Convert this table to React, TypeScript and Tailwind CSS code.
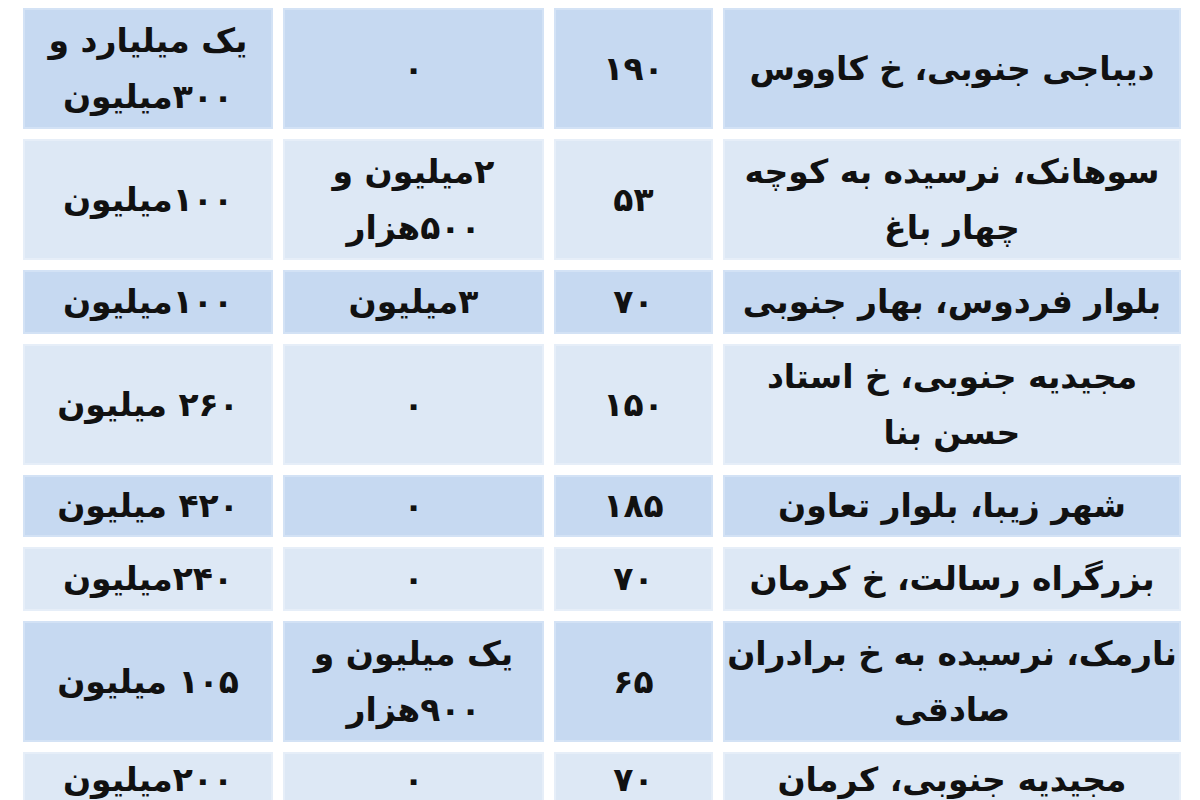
import React from "react";

type Row = {
  place: React.ReactNode;
  area: string;
  rent: React.ReactNode;
  deposit: React.ReactNode;
  dark: boolean;
  h: string;
};

const rows: Row[] = [
  { place: "دیباجی جنوبی، خ کاووس", area: "۱۹۰", rent: "۰", deposit: <>یک میلیارد و<br />۳۰۰میلیون</>, dark: true, h: "h-[121px]" },
  { place: <>سوهانک، نرسیده به کوچه<br />چهار باغ</>, area: "۵۳", rent: <>۲میلیون و<br />۵۰۰هزار</>, deposit: "۱۰۰میلیون", dark: false, h: "h-[121px]" },
  { place: "بلوار فردوس، بهار جنوبی", area: "۷۰", rent: "۳میلیون", deposit: "۱۰۰میلیون", dark: true, h: "h-[64px]" },
  { place: <>مجیدیه جنوبی، خ استاد<br />حسن بنا</>, area: "۱۵۰", rent: "۰", deposit: "۲۶۰ میلیون", dark: false, h: "h-[121px]" },
  { place: "شهر زیبا، بلوار تعاون", area: "۱۸۵", rent: "۰", deposit: "۴۲۰ میلیون", dark: true, h: "h-[62px]" },
  { place: "بزرگراه رسالت، خ کرمان", area: "۷۰", rent: "۰", deposit: "۲۴۰میلیون", dark: false, h: "h-[64px]" },
  { place: <>نارمک، نرسیده به خ برادران<br />صادقی</>, area: "۶۵", rent: <>یک میلیون و<br />۹۰۰هزار</>, deposit: "۱۰۵ میلیون", dark: true, h: "h-[121px]" },
  // last row runs off the bottom of the shot, keep it short so the text stays whole
  { place: "مجیدیه جنوبی، کرمان", area: "۷۰", rent: "۰", deposit: "۲۰۰میلیون", dark: false, h: "h-[48px]" },
];

function Cell({ dark, children }: { dark: boolean; children: React.ReactNode }) {
  return (
    <div
      className={
        dark
          ? "flex items-center justify-center text-center bg-[#c6d9f1] shadow-[inset_0_0_0_2px_#d3e2f5]"
          : "flex items-center justify-center text-center bg-[#dde8f5] shadow-[inset_0_0_0_2px_#e6eef8]"
      }
    >
      {children}
    </div>
  );
}

export default function App() {
  return (
    <div className="h-[800px] overflow-hidden bg-white pt-[8px] pl-[24px] pr-[19px]">
      <div
        dir="rtl"
        className="flex flex-col gap-[10px] text-[33px] leading-[56px] font-bold text-[#111] [font-family:'DejaVu_Sans',sans-serif]"
      >
        {rows.map((r, i) => (
          <div key={i} className={`grid grid-cols-[458px_159px_261px_250px] gap-x-[10px] ${r.h}`}>
            <Cell dark={r.dark}>{r.place}</Cell>
            <Cell dark={r.dark}>{r.area}</Cell>
            <Cell dark={r.dark}>{r.rent}</Cell>
            <Cell dark={r.dark}>{r.deposit}</Cell>
          </div>
        ))}
      </div>
    </div>
  );
}
